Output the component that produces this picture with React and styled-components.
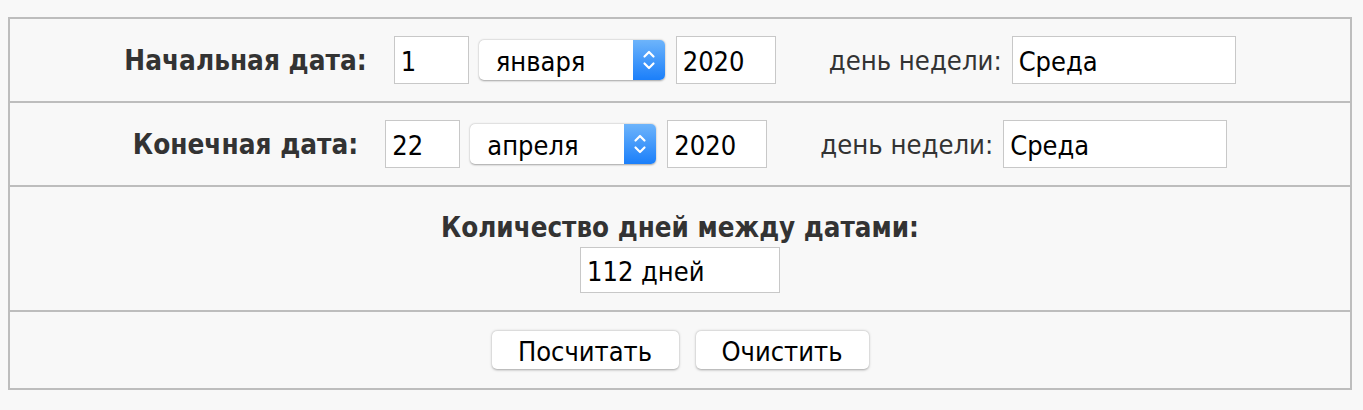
import { useState } from 'react'
import styled, { createGlobalStyle } from 'styled-components'

const GlobalStyle = createGlobalStyle`
  body {
    margin: 8px;
    background: #f8f8f8;
    font-family: "DejaVu Sans Condensed", "DejaVu Sans", sans-serif;
  }
`

const months = [
  'января', 'февраля', 'марта', 'апреля', 'мая', 'июня',
  'июля', 'августа', 'сентября', 'октября', 'ноября', 'декабря',
]

const Calculator = styled.div`
  width: 1344px;
  margin-top: 9px;
  box-sizing: border-box;
  border: 2px solid #bdbdbd;
  background: #f8f8f8;
  display: flex;
  flex-direction: column;
`

const Row = styled.div`
  display: flex;
  flex-direction: ${p => (p.$stack ? 'column' : 'row')};
  align-items: center;
  justify-content: center;
  padding: ${p => p.$pad || '17px 0'};
  & + & {
    border-top: 2px solid #bdbdbd;
  }
`

const Label = styled.span`
  font-weight: bold;
  font-size: 27.7px;
  color: #333;
  margin-right: 27px;
`

const Heading = styled.span`
  font-weight: bold;
  font-size: 27.5px;
  color: #333;
  line-height: 32px;
`

const Caption = styled.span`
  font-size: 27.2px;
  color: #333;
  margin: 0 10px 0 53px;
`

const Field = styled.input`
  box-sizing: border-box;
  width: ${p => p.$w}px;
  height: ${p => p.$h || 48}px;
  margin: ${p => p.$m || '0'};
  padding: 2px 6px 0;
  border: 1px solid #c8c8c8;
  background: #fff;
  font-family: inherit;
  font-size: 27px;
  color: #000;
  outline: none;
`

const SelectWrap = styled.div`
  display: flex;
  width: 186px;
  height: 40px;
  margin: 0 11px 0 10px;
  border-radius: 5px;
  background: #fff;
  box-shadow: 0 0.5px 2px rgba(0, 0, 0, 0.35);
  overflow: hidden;
`

const Select = styled.select`
  flex: 1;
  min-width: 0;
  appearance: none;
  border: none;
  background: transparent;
  padding: 2px 0 0 17px;
  font-family: inherit;
  font-size: 27px;
  color: #000;
  outline: none;
`

const ArrowBox = styled.div`
  width: 32px;
  display: flex;
  align-items: center;
  justify-content: center;
  pointer-events: none;
  background: linear-gradient(#6db4fb, #1b7ffa);
`

const Button = styled.button`
  box-sizing: border-box;
  width: ${p => p.$w}px;
  height: 38px;
  padding: 2px 0 0;
  border: none;
  border-radius: 5px;
  background: #fff;
  box-shadow: 0 0.5px 2.5px rgba(0, 0, 0, 0.35);
  font-family: inherit;
  font-size: 27px;
  color: #000;
  & + & {
    margin-left: 17px;
  }
`

function Arrows() {
  return (
    <svg width="16" height="26" viewBox="0 0 16 26" fill="none" stroke="#fff" strokeWidth="2.2" strokeLinecap="round" strokeLinejoin="round">
      <path d="M3.5 9.5 L8 5 L12.5 9.5" />
      <path d="M3.5 16.5 L8 21 L12.5 16.5" />
    </svg>
  )
}

function DateRow({ title, day, month, year, weekday }) {
  return (
    <Row>
      <Label>{title}</Label>
      <Field $w={75} defaultValue={day} />
      <SelectWrap>
        <Select defaultValue={month}>
          {months.map(m => <option key={m} value={m}>{m}</option>)}
        </Select>
        <ArrowBox><Arrows /></ArrowBox>
      </SelectWrap>
      <Field $w={100} defaultValue={year} />
      <Caption>день недели:</Caption>
      <Field $w={224} defaultValue={weekday} />
    </Row>
  )
}

export default function App() {
  const [result] = useState('112 дней')
  return (
    <>
      <GlobalStyle />
      <Calculator>
        <DateRow title="Начальная дата:" day="1" month="января" year="2020" weekday="Среда" />
        <DateRow title="Конечная дата:" day="22" month="апреля" year="2020" weekday="Среда" />
        <Row $stack $pad="24px 0 17px">
          <Heading>Количество дней между датами:</Heading>
          <Field $w={200} $h={46} $m="4px 0 0" defaultValue={result} />
        </Row>
        <Row $pad="19px 0">
          <Button $w={187}>Посчитать</Button>
          <Button $w={173}>Очистить</Button>
        </Row>
      </Calculator>
    </>
  )
}
